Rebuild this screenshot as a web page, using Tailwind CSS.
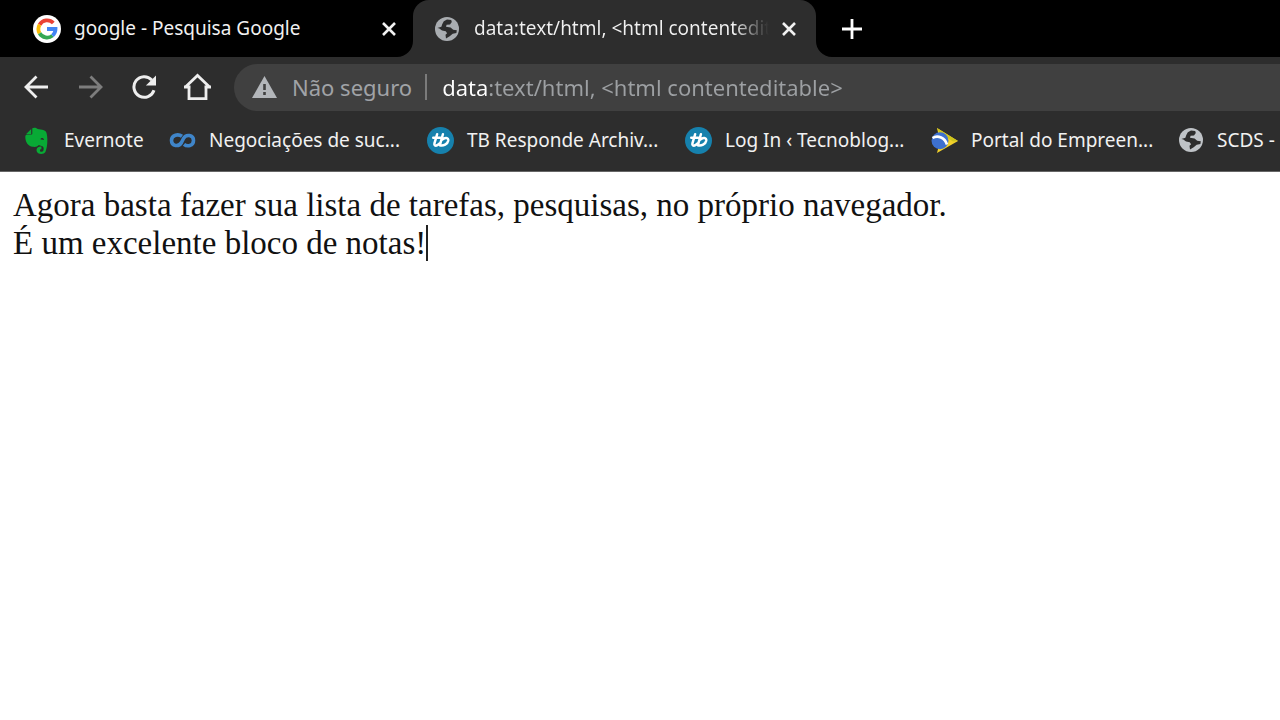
<!DOCTYPE html>
<html lang="pt-BR">
<head>
<meta charset="utf-8">
<meta name="viewport" content="width=device-width, initial-scale=1">
<title>data:text/html, &lt;html contenteditable&gt;</title>
<script src="https://cdn.jsdelivr.net/npm/@tailwindcss/browser@4"></script>
</head>
<body class="flex min-h-screen flex-col overflow-x-hidden bg-white font-['Noto_Sans','Open_Sans',sans-serif]">
<svg class="hidden" aria-hidden="true">
  <symbol id="globe" viewBox="0 0 24 24"><circle cx="12" cy="12" r="12" fill="currentColor"/><path d="M2.300 11c2 .2 3.200 1.200 4.800 2.600l3.600.6 1.400 2-1.600 1.600.5 3.600 3.700-2.200 3-2.500 3.700-.8.400-2.600-3.600-.5-2.600-2.400-4.600-.6.600-2 3.400-.3 1.800-2.400-.6-2.200L12 2.400 8.800 4.200 7.200 7.300l-.8 2.500z" fill="#2d2d2d"/></symbol>
  <symbol id="cross" viewBox="0 0 16 16"><path d="M2 2l12 12M14 2L2 14" fill="none" stroke="currentColor" stroke-width="2.600"/></symbol>
  <symbol id="tb" viewBox="0 0 28 28"><circle cx="14" cy="14" r="14" fill="#1681ad"/><g fill="none" stroke="#fff" stroke-width="2.600" stroke-linecap="round" stroke-linejoin="round"><path d="M10.500 7.500L7.700 17c-.5 2 1 3 3 1.800L13 17M6.500 11.200h7.300M16.500 7.500L13.300 19c3.700 1 8-1.200 8.700-4.800.6-3.500-3.700-3.800-6.600-.8"/></g></symbol>
</svg>

<header class="bg-[#2d2d2d] text-[#f1f1f1]">
  <nav class="flex h-[57px] bg-black" aria-label="Guias">
    <div class="flex w-[413px] shrink-0 items-center pr-4 pl-[33px]">
      <svg class="mr-[13px] size-7 shrink-0" viewBox="0 0 28 28"><circle cx="14" cy="14" r="14" fill="#fff"/><g fill="none" stroke-width="3.800"><path d="M6.600 9.700A8.600 8.600 0 0 1 20.300 8" stroke="#ea4335"/><path d="M6.600 9.700a8.600 8.600 0 0 0 0 8.600" stroke="#fbbc05"/><path d="M6.600 18.300a8.600 8.600 0 0 0 12.900 2.300" stroke="#34a853"/><path d="M19.500 20.600c2-1.700 3-3.900 3-6.600H14" stroke="#4285f4"/></g></svg>
      <a href="#" class="flex-1 truncate text-[19px]">google - Pesquisa Google</a>
      <button type="button" aria-label="Fechar guia"><svg class="size-4"><use href="#cross"/></svg></button>
    </div>
    <div class="relative flex w-[403px] shrink-0 items-center rounded-t-2xl bg-[#2d2d2d] pr-[19px] pl-[22px]">
      <svg class="absolute bottom-0 -left-4 size-4" viewBox="0 0 16 16"><path d="M16 0v16H0A16 16 0 0 0 16 0z" fill="#2d2d2d"/></svg>
      <svg class="absolute -right-4 bottom-0 size-4" viewBox="0 0 16 16"><path d="M0 0v16h16A16 16 0 0 1 0 0z" fill="#2d2d2d"/></svg>
      <svg class="mr-[15px] size-6 shrink-0 text-[#a9adb1]"><use href="#globe"/></svg>
      <a href="#" class="mr-3 min-w-0 flex-1 overflow-hidden bg-linear-to-r from-[#f1f1f1] from-88% to-[#2d2d2d] bg-clip-text text-[19px] whitespace-nowrap text-transparent">data:text/html, &lt;html contenteditable&gt;</a>
      <button type="button" aria-label="Fechar guia"><svg class="size-4"><use href="#cross"/></svg></button>
    </div>
    <button type="button" class="ml-[26px] text-white" aria-label="Nova guia"><svg class="size-5" viewBox="0 0 20 20"><path d="M10 0v20M0 10h20" stroke="currentColor" stroke-width="2.800"/></svg></button>
  </nav>

  <div class="flex h-[60px] items-center pl-6">
    <button type="button" aria-label="Voltar"><svg class="h-6 w-[25px]" viewBox="0 0 25 24"><path d="M24 12H2.500M12.500 1.500L2 12l10.500 10.500" fill="none" stroke="#eee" stroke-width="2.800"/></svg></button>
    <button type="button" class="ml-[29px]" aria-label="Avançar" disabled><svg class="h-6 w-[25px]" viewBox="0 0 25 24"><path d="M1 12h21.500M12.500 1.500L23 12 12.500 22.500" fill="none" stroke="#7d7d7d" stroke-width="2.800"/></svg></button>
    <button type="button" class="ml-[29px]" aria-label="Recarregar"><svg class="size-6" viewBox="0 0 24 24"><path d="M22 15.300A10.300 10.300 0 1 1 19.800 5" fill="none" stroke="#eee" stroke-width="3"/><path d="M24 .5v10.100H13.900z" fill="#eee"/></svg></button>
    <button type="button" class="ml-7" aria-label="Página inicial"><svg class="h-7 w-[27px]" viewBox="0 0 27 28"><path d="M1.200 14.300L13.500 2.500l12.300 11.800M0 14h6.500M20.500 14H27M5 13v12.600h17V13" fill="none" stroke="#eee" stroke-width="2.800"/></svg></button>
    <div class="ml-[23px] flex h-[47px] flex-1 items-center rounded-l-full bg-[#404040] pl-[18px] text-[22px] text-[#a0a3a7]">
      <button type="button" class="flex shrink-0 items-center gap-[15px] border-r-2 border-[#7b7b7b] pr-[13px] leading-[26px]"><svg class="h-[22px] w-[25px]" viewBox="0 0 25 22"><path d="M12.500 0L25 22H0z" fill="#b3b6ba"/><path d="M12.500 8v6M12.500 16v3" stroke="#404040" stroke-width="2.600"/></svg>Não seguro</button>
      <input type="text" aria-label="Endereço" value="data:text/html, &lt;html contenteditable&gt;" class="ml-[15px] h-9 min-w-0 flex-1 bg-linear-to-r from-white from-[46px] to-[#9da0a3] to-[46px] bg-clip-text text-transparent outline-none">
    </div>
  </div>

  <nav class="flex h-[55px] overflow-hidden border-b border-[#666] pb-2 pl-6 text-[19px] whitespace-nowrap" aria-label="Favoritos">
    <a href="#" class="flex w-[145px] shrink-0 items-center gap-[13px]"><svg class="size-[27px] shrink-0" viewBox="0 0 27 27"><path d="M8.300 1.200c1-.7 3.800-.8 5.400.8l4.500.7c2.500.5 4 1.200 4.600 4.200 1 5.200.7 13.200-1.400 18.100-1.100 2.100-5 2.600-7.200 1.200-2.600-1.700-2-6 1-6.500l2.200-.1v2.700c-1.800-.2-2 2.100-.3 2.500 2.200.5 2.700-1.700 2.500-3.800-.3-2.300-3.300-1.900-4.800-2.900-1.200 1.600-3.400 2-6 1.700C4 19.200 1.500 15.400 1.300 10c0-1.600.6-2.500 1.800-2.500h4.200c.7 0 1-.3 1-1z" fill="#08aa35"/><path d="M7.200 2.100L2.200 7h5z" fill="#08aa35"/><path d="M16.500 12.500c.3-2 3.200-1.900 3.500.5-1-.4-2.300-.6-3.500-.5z" fill="#2d2d2d"/></svg>Evernote</a>
    <a href="#" class="flex w-[258px] shrink-0 items-center gap-[13px]"><svg class="size-[27px] shrink-0" viewBox="0 0 27 27"><path d="M13 9.300C9.500 6.800 2.500 7.500 2.500 13.300c0 6.400 7.500 6.600 10 2.200l2-4c2.500-4.700 10-3.700 10 2s-6.500 6.300-9.500 3.800" fill="none" stroke="#3f85c9" stroke-width="3.600"/></svg>Negociações de suc...</a>
    <a href="#" class="flex w-[258px] shrink-0 items-center gap-[13px]"><svg class="size-[27px] shrink-0"><use href="#tb"/></svg>TB Responde Archiv...</a>
    <a href="#" class="flex w-[246px] shrink-0 items-center gap-[13px]"><svg class="size-[27px] shrink-0"><use href="#tb"/></svg>Log In ‹ Tecnoblog...</a>
    <a href="#" class="flex w-[246px] shrink-0 items-center gap-[13px]"><svg class="size-[27px] shrink-0" viewBox="0 0 27 27"><path d="M6 1l21 13L6 26l3-12z" fill="#f2d12b"/><path d="M6 1l21 13-5 .5L8.500 6z" fill="#cfc51d"/><circle cx="9" cy="13.800" r="8.500" fill="#3d70cf"/><path d="M1.500 11C7 7.500 14 11 16 17.500" fill="none" stroke="#fff" stroke-width="2.600"/></svg>Portal do Empreen...</a>
    <a href="#" class="flex shrink-0 items-center gap-[14px] pl-0.5"><svg class="size-6 shrink-0 text-[#bfc3c7]"><use href="#globe"/></svg>SCDS -</a>
  </nav>
</header>

<main contenteditable="true" spellcheck="false" class="flex-1 px-[13px] pt-[14px] font-['Liberation_Serif',serif] text-[33px] leading-[38px] text-[#111] outline-none"><p>Agora basta fazer sua lista de tarefas, pesquisas, no próprio navegador.</p><p>É um excelente bloco de notas!<span class="inline-block h-9 w-0.5 bg-[#222] align-text-bottom"></span></p></main>
</body>
</html>
